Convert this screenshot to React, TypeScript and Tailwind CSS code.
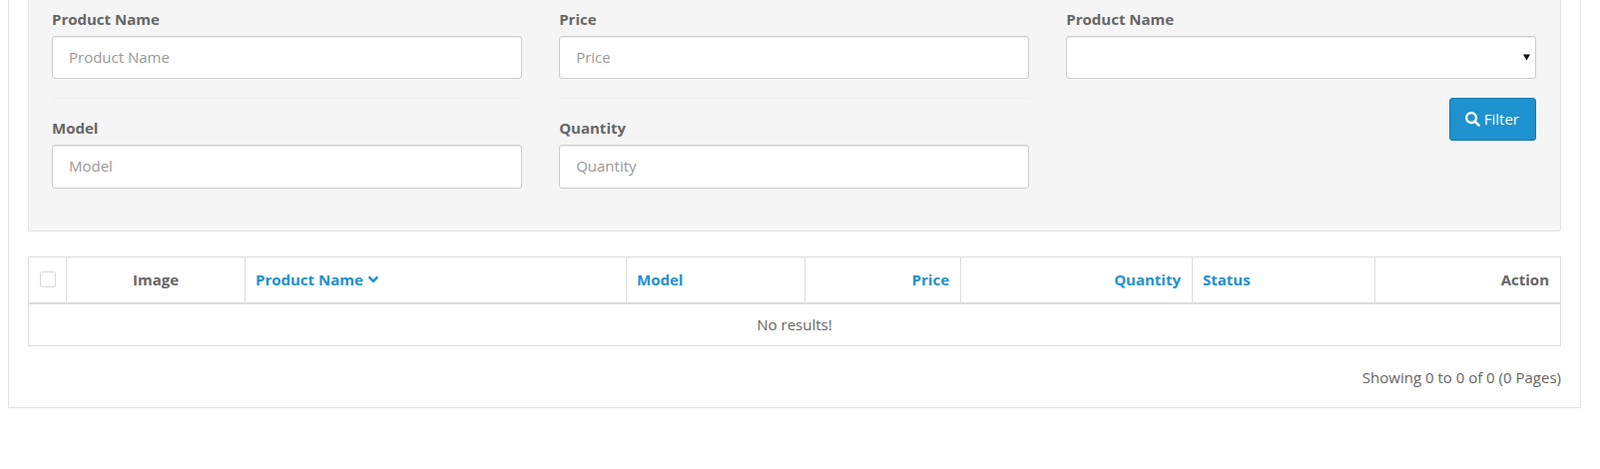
import { FaAngleDown, FaSearch } from "react-icons/fa"

const inputClass =
  "block w-full rounded-[3px] border border-[#ccc] bg-white pl-[16px] pr-[17px] pb-[2px] text-[15px] text-[#555] shadow-[inset_0_1px_1px_rgba(0,0,0,0.075)] placeholder:text-[#999] outline-none"

function Field({ label, placeholder, height }: { label: string; placeholder: string; height: string }) {
  return (
    <div>
      <label className="mb-[7px] block text-[15px] leading-[20px] font-bold text-[#666]">{label}</label>
      <input className={`${inputClass} ${height}`} placeholder={placeholder} />
    </div>
  )
}

export default function App() {
  return (
    <div className="h-[470px] bg-white font-['Open_Sans',sans-serif] text-[15px] text-[#666]">
      <div className="ml-[8px] mr-[19px] border border-t-0 border-[#e3e3e3] bg-white px-[19px] pb-[19px]">
        <div className="rounded-b-[3px] border border-t-0 border-[#e3e3e3] bg-[#f5f5f5] pt-[9px] pr-[24px] pb-[42px] pl-[23px]">
          <div className="grid grid-cols-3 gap-x-[37.5px]">
            <div>
              <Field label="Product Name" placeholder="Product Name" height="h-[43px]" />
              <hr className="mt-[19px] mb-[19px] border-[#eee]" />
              <Field label="Model" placeholder="Model" height="h-[44px]" />
            </div>
            <div>
              <Field label="Price" placeholder="Price" height="h-[43px]" />
              <hr className="mt-[19px] mb-[19px] border-[#eee]" />
              <Field label="Quantity" placeholder="Quantity" height="h-[44px]" />
            </div>
            <div>
              <label className="mb-[7px] block text-[15px] leading-[20px] font-bold text-[#666]">Product Name</label>
              <div className="relative">
                <select className={`${inputClass} h-[43px] appearance-none`}>
                  <option value=""></option>
                </select>
                <svg viewBox="0 0 6 6" className="absolute top-[18px] right-[6px] h-[7px] w-[7px]">
                  <path d="M0 0.5h6L3 5.5z" fill="#111" />
                </svg>
              </div>
              <div className="mt-[19px] flex justify-end">
                <button className="flex h-[43px] items-center gap-[4px] rounded-[3px] border border-[#1978ab] bg-[#1e91cf] pr-[16px] pl-[15px] text-[15px] text-white">
                  <FaSearch className="h-[15px] w-[15px]" />
                  Filter
                </button>
              </div>
            </div>
          </div>
        </div>

        <table className="mt-[25px] w-full table-fixed border border-[#ddd] text-[15px]">
          <thead>
            <tr className="h-[46px] border-b-2 border-[#ddd] font-bold">
              <th className="w-[38px] border-r border-[#ddd]">
                <span className="mx-auto block h-4 w-4 rounded-[2px] border border-[#d9d9d9]" />
              </th>
              <th className="w-[179px] border-r border-[#ddd] text-center">Image</th>
              <th className="w-[382px] border-r border-[#ddd] pr-[11px] pl-[10px] text-left text-[#1e91cf]">
                <span className="inline-flex items-center gap-[2px]">
                  Product Name
                  <FaAngleDown className="h-[16px] w-[16px]" />
                </span>
              </th>
              <th className="w-[179px] border-r border-[#ddd] pr-[11px] pl-[10px] text-left text-[#1e91cf]">Model</th>
              <th className="w-[156px] border-r border-[#ddd] pr-[11px] pl-[10px] text-right text-[#1e91cf]">Price</th>
              <th className="w-[232px] border-r border-[#ddd] pr-[11px] pl-[10px] text-right text-[#1e91cf]">Quantity</th>
              <th className="w-[183px] border-r border-[#ddd] pr-[11px] pl-[10px] text-left text-[#1e91cf]">Status</th>
              <th className="pr-[11px] pl-[10px] text-right">Action</th>
            </tr>
          </thead>
          <tbody>
            <tr className="h-[43px]">
              <td colSpan={8} className="text-center">No results!</td>
            </tr>
          </tbody>
        </table>

        <p className="mt-[20px] text-right leading-[22px]">Showing 0 to 0 of 0 (0 Pages)</p>
      </div>
    </div>
  )
}
